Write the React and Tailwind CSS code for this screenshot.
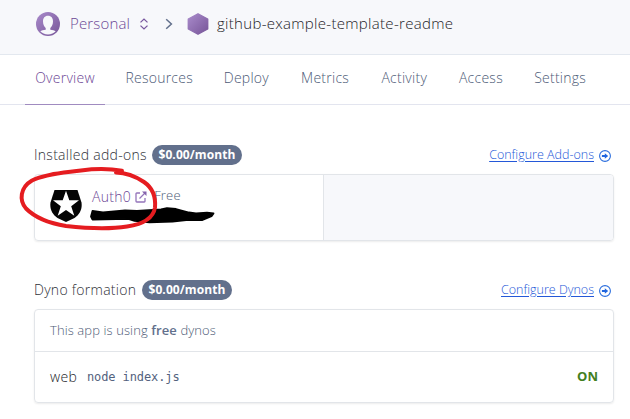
import React from "react";

function Avatar() {
  return (
    <svg className="h-6 w-6 shrink-0" viewBox="0 0 24 24">
      <defs>
        <linearGradient id="avatar" x1="0" y1="0" x2="1" y2="1">
          <stop offset="0" stopColor="#a98bcb" />
          <stop offset="1" stopColor="#775598" />
        </linearGradient>
      </defs>
      <circle cx="12" cy="12" r="12" fill="url(#avatar)" />
      <path
        d="M12 3.700c-3.300 0-5 2.300-5 5.600 0 3 1.100 5.400 2.700 6.700v1.700c-2.300.3-4.200.8-5.400 1.600 1.700 1.900 4.500 3.100 7.700 3.100s6-1.200 7.700-3.100c-1.200-.8-3.100-1.300-5.400-1.600V16c1.600-1.300 2.700-3.700 2.700-6.700 0-3.300-1.700-5.600-5-5.600z"
        fill="#f7f8fb"
      />
    </svg>
  );
}

function Hexagon() {
  return (
    <svg className="ml-[14px] h-[22px] w-[22px] shrink-0" viewBox="0 0 22 22">
      <defs>
        <linearGradient id="hexagon" x1="0" y1="0" x2="1" y2="1">
          <stop offset="0" stopColor="#a98bcb" />
          <stop offset="1" stopColor="#775598" />
        </linearGradient>
      </defs>
      <path
        d="M11 .8 20.700 6v10L11 21.200 1.300 16V6z"
        fill="url(#hexagon)"
        stroke="url(#hexagon)"
        strokeWidth="1.400"
        strokeLinejoin="round"
      />
    </svg>
  );
}

function Header() {
  return (
    <header className="flex h-[55px] items-center border-b border-[#e3e8ef] bg-[#f7f8fb] pb-[7px] pl-9">
      <Avatar />
      <span className="ml-[10px] w-[60px] text-[15px] tracking-[0.15px] text-[#6c4795]">Personal</span>
      <svg className="ml-[9px] h-3 w-[10px] shrink-0" viewBox="0 0 10 12" fill="none" stroke="#79589f" strokeWidth="1.300">
        <path d="M1.500 4.400 5 1.100l3.500 3.300M1.500 7.600 5 10.900l3.500-3.300" />
      </svg>
      <svg className="ml-[16px] h-3 w-2 shrink-0" viewBox="0 0 8 12" fill="none" stroke="#62708c" strokeWidth="1.500">
        <path d="M1.200 1.200 6.400 6l-5.200 4.800" />
      </svg>
      <Hexagon />
      <span className="ml-2 text-[15px] tracking-[0.3px] text-[#232328]">github-example-template-readme</span>
    </header>
  );
}

const tabs = [
  { label: "Overview", width: "w-20" },
  { label: "Resources", width: "w-[85px]" },
  { label: "Deploy", width: "w-[66px]" },
  { label: "Metrics", width: "w-[68px]" },
  { label: "Activity", width: "w-[67px]" },
  { label: "Access", width: "w-[63px]" },
  { label: "Settings", width: "w-[72px]" },
];

function Tabs() {
  return (
    <nav className="flex h-[50px] gap-[11.700px] border-b border-[#e3e5ef] pl-[25px] text-[14px] tracking-[0.25px] text-[#4c5a76]">
      {tabs.map(({ label, width }, i) => (
        <a
          key={label}
          className={`${width} -mb-px flex shrink-0 items-center justify-center whitespace-nowrap border-b pb-[4px] ${
            i === 0 ? "border-[#a08bc0] text-[#6c4795]" : "border-transparent"
          }`}
        >
          {label}
        </a>
      ))}
    </nav>
  );
}

function SectionHead({ title, link, titleClass }) {
  return (
    <div className="flex h-5 items-center">
      <h2 className={`${titleClass} whitespace-nowrap pb-[2px] text-[14px] tracking-[0.28px] text-[#303138]`}>{title}</h2>
      <span className="flex h-5 w-[90px] items-center justify-center rounded-full bg-[#62708c] text-[12px] font-bold tracking-[0.1px] text-white">
        $0.00/month
      </span>
      <a className="ml-auto whitespace-nowrap text-[12.5px] text-[#2458d8] underline underline-offset-2">
        {link}
      </a>
      <svg className="mr-[3px] mt-[2px] ml-[5px] h-3 w-3 shrink-0" viewBox="0 0 12 12">
        <circle cx="6" cy="6" r="5.400" fill="none" stroke="#2a6ddd" strokeWidth="1.100" />
        <path d="M2.900 5h2.900V3.200L9.200 6 5.800 8.800V7H2.900z" fill="#1f65df" />
      </svg>
    </div>
  );
}

function AddonIcon() {
  return (
    <svg className="h-8 w-8 shrink-0" viewBox="0 0 32 32">
      <path d="M4.500 0h23l4 12.500c1 7-2 12-7 15.500L16 32l-8.500-4c-5-3.500-8-8.500-7-15.500z" fill="#050505" />
      <path d="M16 .8 19.300 10.300h9.700l-7.800 5.900 3.100 9.600L16 20l-8.300 5.800 3.100-9.600L3 10.300h9.700z" fill="#fff" />
    </svg>
  );
}

function Annotations() {
  return (
    <svg className="pointer-events-none absolute left-0 top-0 h-[419px] w-[630px]" viewBox="0 0 630 419" fill="none">
      <path
        d="M92.500 211 103 212.500l22-2.200 12 .5 24-1.300 6-1.300 9 .8 13 3.500 7 1 11-.800 6.500.8-2 2.700-9 3.800-14-.2-16 1.800-23 .700-15-1.500-6-2-36 .700-1.500-3z"
        fill="#000"
        stroke="#000"
        strokeWidth="1.800"
        strokeLinejoin="round"
      />
      <path
        d="M122 170.800c-10-1.800-26-2.300-41-.3-18 2.500-36 3.500-49 10-12 7-13 20-6 28 8 8 21 14.500 40 17.500 18 2 42 3.500 61 .500 14-2 26-7 28-19 1-12-3-20-11-25.500-9-6-18-9.300-28-9.500"
        stroke="#e51c20"
        strokeWidth="4"
        strokeLinecap="round"
        strokeLinejoin="round"
      />
    </svg>
  );
}

export default function App() {
  return (
    <div className="relative h-[419px] w-[630px] overflow-hidden bg-white font-['Open_Sans','Noto_Sans',sans-serif] font-light">
      <Header />
      <Tabs />
      <main className="w-[648px] px-[34px] pt-10">
        <SectionHead title="Installed add-ons" link="Configure Add-ons" titleClass="w-[118px]" />
        <section className="mt-[9px] flex h-[67px] w-[580px] overflow-hidden rounded border border-[#e2e5e9] shadow-[0_1px_2px_rgba(0,0,0,0.08)]">
          <div className="flex w-[289px] shrink-0 border-r border-[#e2e5e9] pl-[15px] pt-[15px]">
            <AddonIcon />
            <div className="ml-[10px] flex h-3 items-center">
              <a className="text-[14px] tracking-[0.3px] text-[#6c4795]">Auth0</a>
              <svg className="ml-1 mt-[2px] h-3 w-3" viewBox="0 0 12 12" fill="none" stroke="#9474bb" strokeWidth="1.300">
                <path d="M5 2H1.800Q1 2 1 2.800v7.400q0 .8.800.8h7.400q.8 0 .8-.8V7M4.500 7.500 10.500 1.500" />
                <path d="M7 .5h4.500V5z" fill="#8563ac" stroke="none" />
              </svg>
              <span className="ml-[7px] text-[13px] tracking-[0.2px] text-[#4c5a76]">Free</span>
            </div>
          </div>
          <div className="flex-1 bg-[#f7f8fb]" />
        </section>
        <div className="mt-[39px]">
          <SectionHead title="Dyno formation" link="Configure Dynos" titleClass="w-[108px]" />
        </div>
        <section className="mt-[9px] h-[94px] w-[580px] rounded border border-[#e2e5e9] shadow-[0_1px_2px_rgba(0,0,0,0.08)]">
          <p className="flex h-[42px] items-center border-b border-[#e2e5e9] pl-[15px] text-[13px] tracking-[0.1px] text-[#4c5a76]">
            <span>This app is using <b className="font-semibold text-[#62708c]">free</b> dynos</span>
          </p>
          <div className="flex h-[50px] items-center px-[15px]">
            <span className="w-[37px] pb-[2px] text-[14px] tracking-[0.4px] text-[#232328]">web</span>
            <code className="pb-px font-['DejaVu_Sans_Mono',monospace] text-[12px] tracking-[-0.1px] text-[#53627e]">node index.js</code>
            <span className="ml-auto text-[13px] font-bold text-[#43801f]">ON</span>
          </div>
        </section>
      </main>
      <Annotations />
    </div>
  );
}
